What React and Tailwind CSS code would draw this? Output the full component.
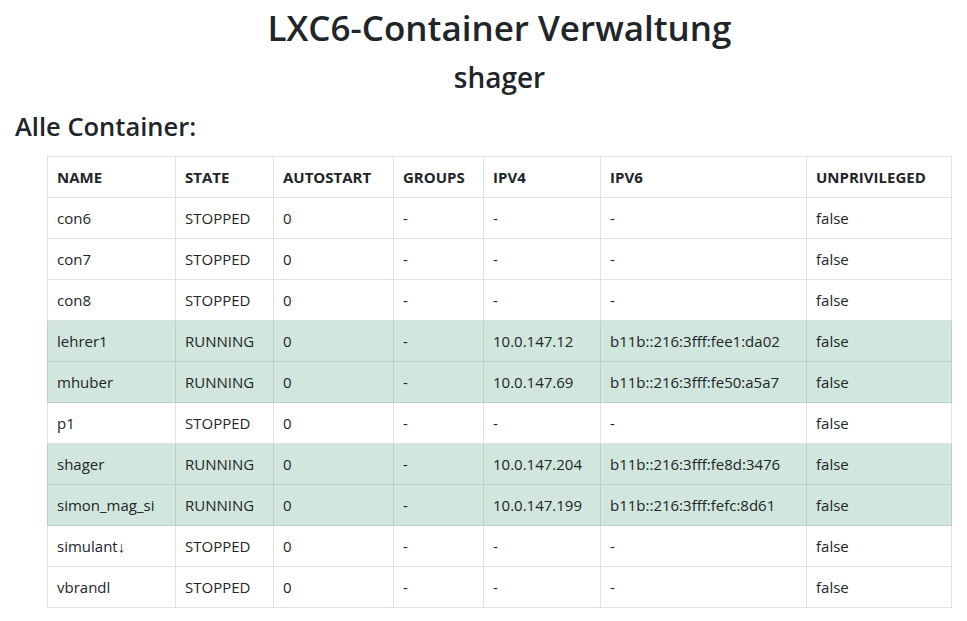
const containers = [
  { name: 'con6', state: 'STOPPED', ipv4: '-', ipv6: '-' },
  { name: 'con7', state: 'STOPPED', ipv4: '-', ipv6: '-' },
  { name: 'con8', state: 'STOPPED', ipv4: '-', ipv6: '-' },
  { name: 'lehrer1', state: 'RUNNING', ipv4: '10.0.147.12', ipv6: 'b11b::216:3fff:fee1:da02' },
  { name: 'mhuber', state: 'RUNNING', ipv4: '10.0.147.69', ipv6: 'b11b::216:3fff:fe50:a5a7' },
  { name: 'p1', state: 'STOPPED', ipv4: '-', ipv6: '-' },
  { name: 'shager', state: 'RUNNING', ipv4: '10.0.147.204', ipv6: 'b11b::216:3fff:fe8d:3476' },
  { name: 'simon_mag_si', state: 'RUNNING', ipv4: '10.0.147.199', ipv6: 'b11b::216:3fff:fefc:8d61' },
  { name: 'simulant\u2193', state: 'STOPPED', ipv4: '-', ipv6: '-' },
  { name: 'vbrandl', state: 'STOPPED', ipv4: '-', ipv6: '-' },
]

const headers = [
  { label: 'NAME', w: 'w-[128px]' },
  { label: 'STATE', w: 'w-[98px]' },
  { label: 'AUTOSTART', w: 'w-[120px]' },
  { label: 'GROUPS', w: 'w-[90px]' },
  { label: 'IPV4', w: 'w-[117px]' },
  { label: 'IPV6', w: 'w-[206px]' },
  { label: 'UNPRIVILEGED', w: 'w-[145px]' },
]

export default function App() {
  return (
    <div className="min-h-[621px] bg-white text-[#212529] font-['Open_Sans',sans-serif]">
      <h1 className="text-center text-[35px] leading-[48px] font-semibold pt-[4px] pl-[32px]">LXC6-Container Verwaltung</h1>
      <h2 className="text-center text-[28px] leading-[34px] font-semibold mt-[8px] pl-[32px]">shager</h2>
      <h3 className="text-[25.5px] leading-[34px] font-semibold ml-[15px] mt-[15px]">Alle Container:</h3>

      <div className="pl-[47px] pt-[13px]">
        <table className="table-fixed border-collapse w-[905px] text-[15px]">
          <thead>
            <tr className="h-[41px]">
              {headers.map((h) => (
                <th key={h.label} className={`${h.w} border border-[#dee2e6] px-[9px] text-left font-bold`}>
                  {h.label}
                </th>
              ))}
            </tr>
          </thead>
          <tbody>
            {containers.map((c) => {
              const running = c.state === 'RUNNING'
              const cell = running
                ? 'border border-[#bcd0c7] px-[9px] bg-[#d1e7dd]'
                : 'border border-[#dee2e6] px-[9px]'
              return (
                <tr key={c.name} className="h-[41px]">
                  <td className={cell}>{c.name}</td>
                  <td className={cell}>{c.state}</td>
                  <td className={cell}>0</td>
                  <td className={cell}>-</td>
                  <td className={cell}>{c.ipv4}</td>
                  <td className={cell}>{c.ipv6}</td>
                  <td className={cell}>false</td>
                </tr>
              )
            })}
          </tbody>
        </table>
      </div>
    </div>
  )
}
